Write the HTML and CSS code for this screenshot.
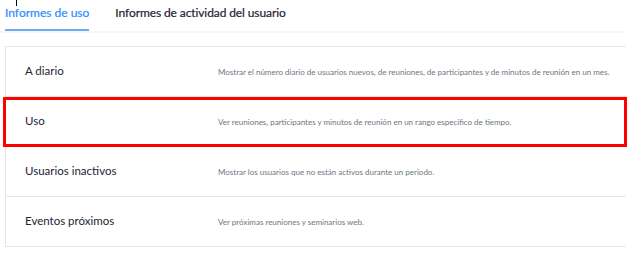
FILE: index.html
```html
<!DOCTYPE html>
<html lang="es">
<head>
  <meta charset="UTF-8" />
  <meta name="viewport" content="width=device-width, initial-scale=1.0"/>
  <title>Informes</title>
  <link rel="stylesheet" href="styles.css">
</head>
<body>

  <!-- cursor de texto -->
  <span class="caret"></span>

  <!-- pestañas -->
  <div class="tabs">
    <div class="tab active">Informes de uso</div>
    <div class="tab">Informes de actividad del usuario</div>
  </div>

  <!-- lista de informes -->
  <div class="report-list">
    <div class="report-row">
      <div class="report-name">A diario</div>
      <div class="report-desc">Mostrar el número diario de usuarios nuevos, de reuniones, de participantes y de minutos de reunión en un mes.</div>
    </div>
    <div class="report-row highlight">
      <div class="report-name">Uso</div>
      <div class="report-desc">Ver reuniones, participantes y minutos de reunión en un rango específico de tiempo.</div>
    </div>
    <div class="report-row">
      <div class="report-name">Usuarios inactivos</div>
      <div class="report-desc">Mostrar los usuarios que no están activos durante un periodo.</div>
    </div>
    <div class="report-row">
      <div class="report-name">Eventos próximos</div>
      <div class="report-desc">Ver próximas reuniones y seminarios web.</div>
    </div>
  </div>

</body>
</html>
```

FILE: styles.css
```css
body, html {
  margin: 0;
  height: 100%;
  background: #ffffff;
  font-family: Lato, "Open Sans", sans-serif;
  overflow: hidden;
}

.caret {
  position: absolute;
  top: 0;
  left: 16px;
  width: 1px;
  height: 6px;
  background: #000000;
}

.tabs {
  display: flex;
  width: 625px;
  height: 31px;
  border-bottom: 2px solid #f7f7f7;
}

.tab {
  margin-left: 5px;
  margin-right: 21px;
  padding-top: 4px;
  font-size: 12px;
  color: #232333;
  line-height: 17px;
  letter-spacing: -0.1px;
  -webkit-text-stroke: 0.2px currentColor;
}

.tab.active {
  color: #2d8cff;
  height: 25px;
  letter-spacing: 0;
  border-bottom: 2px solid #73aaf5;
}

.report-list {
  margin-top: 13px;
  margin-left: 5px;
  width: 620px;
  border-top: 1px solid #e6e6e6;
  border-left: 1px solid #e6e6e6;
}

.report-row {
  position: relative;
  display: flex;
  align-items: baseline;
  box-sizing: border-box;
  height: 50px;
  padding-top: 17px;
  border-bottom: 1px solid #e6e6e6;
}

.report-row.highlight::after {
  content: "";
  position: absolute;
  top: 0;
  bottom: -1px;
  left: -3px;
  right: -1px;
  border: 3px solid #ff0000;
}

.report-name {
  width: 193px;
  padding-left: 19px;
  font-size: 11.5px;
  color: #232333;
}

.report-desc {
  font-size: 8px;
  color: #6e7680;
}
```
